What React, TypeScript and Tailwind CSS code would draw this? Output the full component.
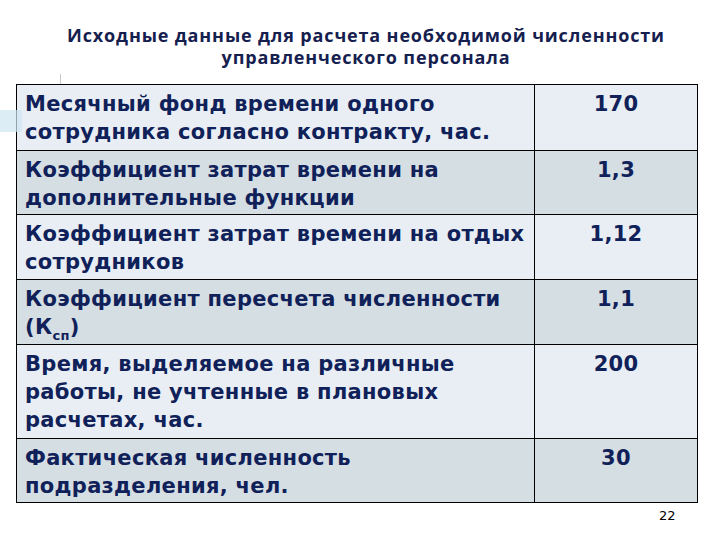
import React from 'react';

type Row = { label: React.ReactNode; value: string; h: string; shade: boolean };

const rows: Row[] = [
  { label: <>Месячный фонд времени одного<br />сотрудника согласно контракту, час.</>, value: '170', h: 'h-[65px]', shade: false },
  { label: <>Коэффициент затрат времени на<br />дополнительные функции</>, value: '1,3', h: 'h-[64px]', shade: true },
  { label: <>Коэффициент затрат времени на отдых<br />сотрудников</>, value: '1,12', h: 'h-[65px]', shade: false },
  {
    label: <>Коэффициент пересчета численности<br />(К<sub className="text-[13px] align-[-3px]">сп</sub>)</>,
    value: '1,1',
    h: 'h-[65px]',
    shade: true,
  },
  { label: <>Время, выделяемое на различные<br />работы, не учтенные в плановых<br />расчетах, час.</>, value: '200', h: 'h-[94px]', shade: false },
  { label: <>Фактическая численность<br />подразделения, чел.</>, value: '30', h: 'h-[64px]', shade: true },
];

export default function App() {
  return (
    <div className="relative w-[720px] h-[540px] bg-white overflow-hidden">
      {/* faint decoration from the slide template */}
      <div className="absolute left-0 top-[110px] w-[22px] h-[22px] bg-[#cfe6f2] opacity-70" />
      <div className="absolute left-[60px] top-[74px] w-px h-[10px] bg-[#c9c9c9]" />

      <div className="pt-[24px] pl-[12px] text-center text-[#15204f] font-bold text-[18px] leading-[22px] tracking-[0.85px] [font-family:'Open_Sans',sans-serif]">
        <div>Исходные данные для расчета необходимой численности</div>
        <div>управленческого персонала</div>
      </div>

      <div className="ml-[16px] mt-[16px] w-[682px] border border-black grid grid-cols-[518px_1fr] text-[#102159] font-bold text-[21px] leading-[28px] tracking-[0.3px] [font-family:'DejaVu_Sans',sans-serif]">
        {rows.map((r, i) => (
          <React.Fragment key={i}>
            <div
              className={`${r.h} pl-[8px] pt-[5px] whitespace-nowrap border-r border-black ${i > 0 ? 'border-t' : ''} ${r.shade ? 'bg-[#d5dee3]' : 'bg-[#e8eef3]'}`}
            >
              {r.label}
            </div>
            <div
              className={`${r.h} pt-[5px] text-center ${i > 0 ? 'border-t border-black' : ''} ${r.shade ? 'bg-[#d5dee3]' : 'bg-[#e8eef3]'}`}
            >
              {r.value}
            </div>
          </React.Fragment>
        ))}
      </div>

      <div className="absolute left-[659px] top-[506px] text-[13px] text-black [font-family:'DejaVu_Sans',sans-serif]">22</div>
    </div>
  );
}
